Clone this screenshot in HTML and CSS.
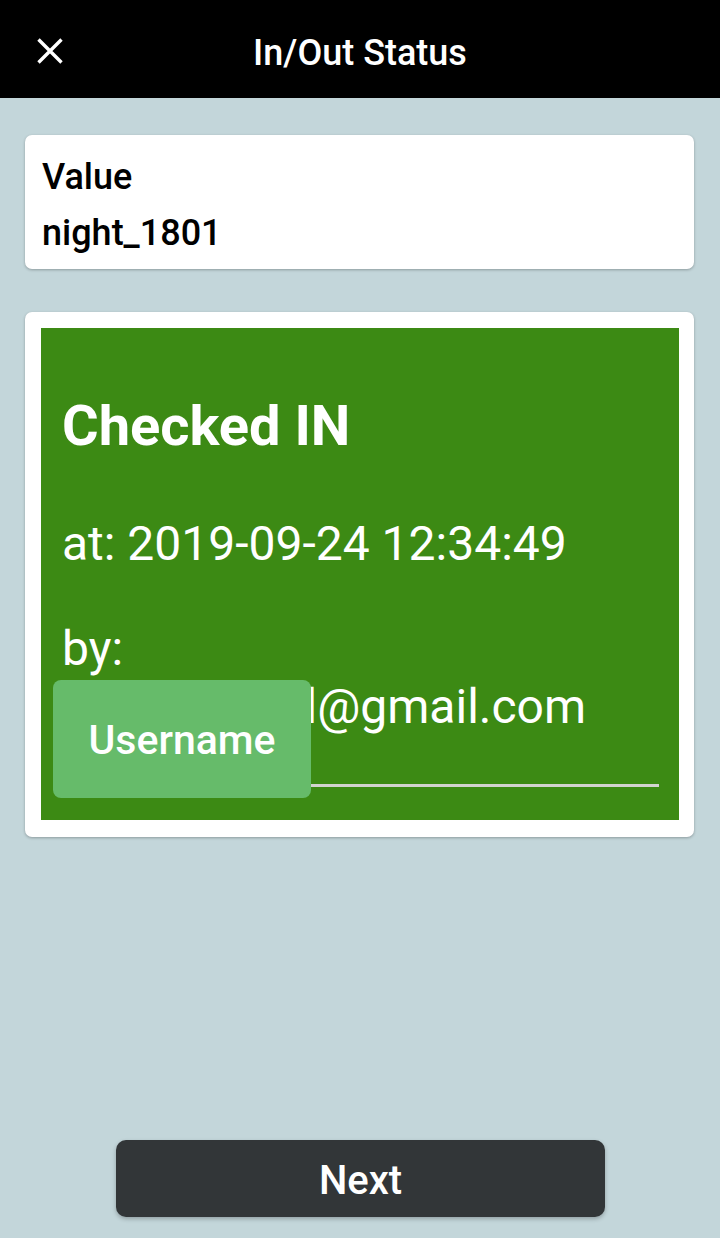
FILE: index.html
```html
<!DOCTYPE html>
<html lang="en">
<head>
<meta charset="utf-8">
<title>In/Out Status</title>
<link rel="stylesheet" href="styles.css">
</head>
<body>
<div class="screen">
  <header class="topbar">
    <button class="close-btn" aria-label="Close">
      <svg viewBox="0 0 26 26" width="26" height="26"><path d="M1.5 1.5 L24.5 24.5 M24.5 1.5 L1.5 24.5" stroke="#fff" stroke-width="3.4" fill="none"/></svg>
    </button>
    <h1 class="title">In/Out Status</h1>
    <span class="spacer"></span>
  </header>

  <main class="content">
    <section class="card value-card">
      <div class="value-label">Value</div>
      <div class="value-text">night_1801</div>
    </section>

    <section class="card status-card">
      <div class="status-panel">
        <h2 class="status-title">Checked IN</h2>
        <p class="status-time">at: 2019-09-24 12:34:49</p>
        <div class="status-by">
          <div class="by-label">by:</div>
          <div class="by-email">night1801.tl@gmail.com</div>
          <span class="chip">Username</span>
        </div>
      </div>
    </section>
  </main>

  <footer class="footer">
    <button class="next-btn">Next</button>
  </footer>
</div>
</body>
</html>
```

FILE: styles.css
```css
* { box-sizing: border-box; }

html, body {
  margin: 0;
  padding: 0;
}

body {
  font-family: Roboto, "Noto Sans", "Liberation Sans", sans-serif;
  background: #c3d6da;
}

.screen {
  height: 1238px;
  display: flex;
  flex-direction: column;
}

.topbar {
  height: 98px;
  background: #000;
  display: grid;
  grid-template-columns: 100px 1fr 100px;
  align-items: center;
  padding-top: 8px;
}

.close-btn {
  background: none;
  border: 0;
  padding: 0;
  margin: -5px 0 0 37px;
  width: 26px;
  height: 26px;
  display: flex;
}

.title {
  margin: 0;
  text-align: center;
  color: #fff;
  font-size: 36px;
  font-weight: 500;
  line-height: normal;
}

.content {
  flex: 1;
  padding: 37px 26px 0 25px;
  display: flex;
  flex-direction: column;
  gap: 43px;
}

.card {
  background: #fff;
  border-radius: 7px;
  box-shadow: 0 1px 3px rgba(0, 0, 0, 0.28);
}

.value-card {
  height: 134px;
  padding: 14px 17px 8px;
  font-size: 36px;
  font-weight: 500;
  line-height: 56px;
  color: #000;
}

.status-card {
  height: 525px;
  padding: 16px 15px 17px 16px;
}

.status-panel {
  height: 100%;
  background: #3c8a14;
  color: #fff;
  padding: 65px 20px 0 21px;
  display: flex;
  flex-direction: column;
}

.status-title {
  margin: 0;
  font-size: 56px;
  font-weight: 700;
  line-height: 67px;
}

.status-time {
  margin: 55px 0 0;
  font-size: 48px;
  font-weight: 400;
  line-height: 58px;
}

.status-by {
  position: relative;
  margin-top: 47px;
  font-size: 48px;
  font-weight: 400;
  line-height: 58px;
  padding-bottom: 48px;
  border-bottom: 3px solid #d2d4d0;
  white-space: nowrap;
}

.chip {
  position: absolute;
  left: -9px;
  top: 60px;
  width: 258px;
  height: 118px;
  background: #66bb6a;
  border-radius: 8px;
  display: flex;
  align-items: center;
  justify-content: center;
  font-size: 41px;
  font-weight: 500;
  color: #fff;
  line-height: 1;
  padding-top: 2px;
}

.footer {
  display: flex;
  justify-content: center;
  padding: 0 0 21px 1px;
}

.next-btn {
  width: 489px;
  height: 77px;
  border: 0;
  border-radius: 10px;
  background: #323638;
  color: #fff;
  font-family: Roboto, "Noto Sans", "Liberation Sans", sans-serif;
  font-size: 40px;
  font-weight: 500;
  box-shadow: 0 2px 4px rgba(0, 0, 0, 0.25);
  padding: 4px 0 0;
}
```
